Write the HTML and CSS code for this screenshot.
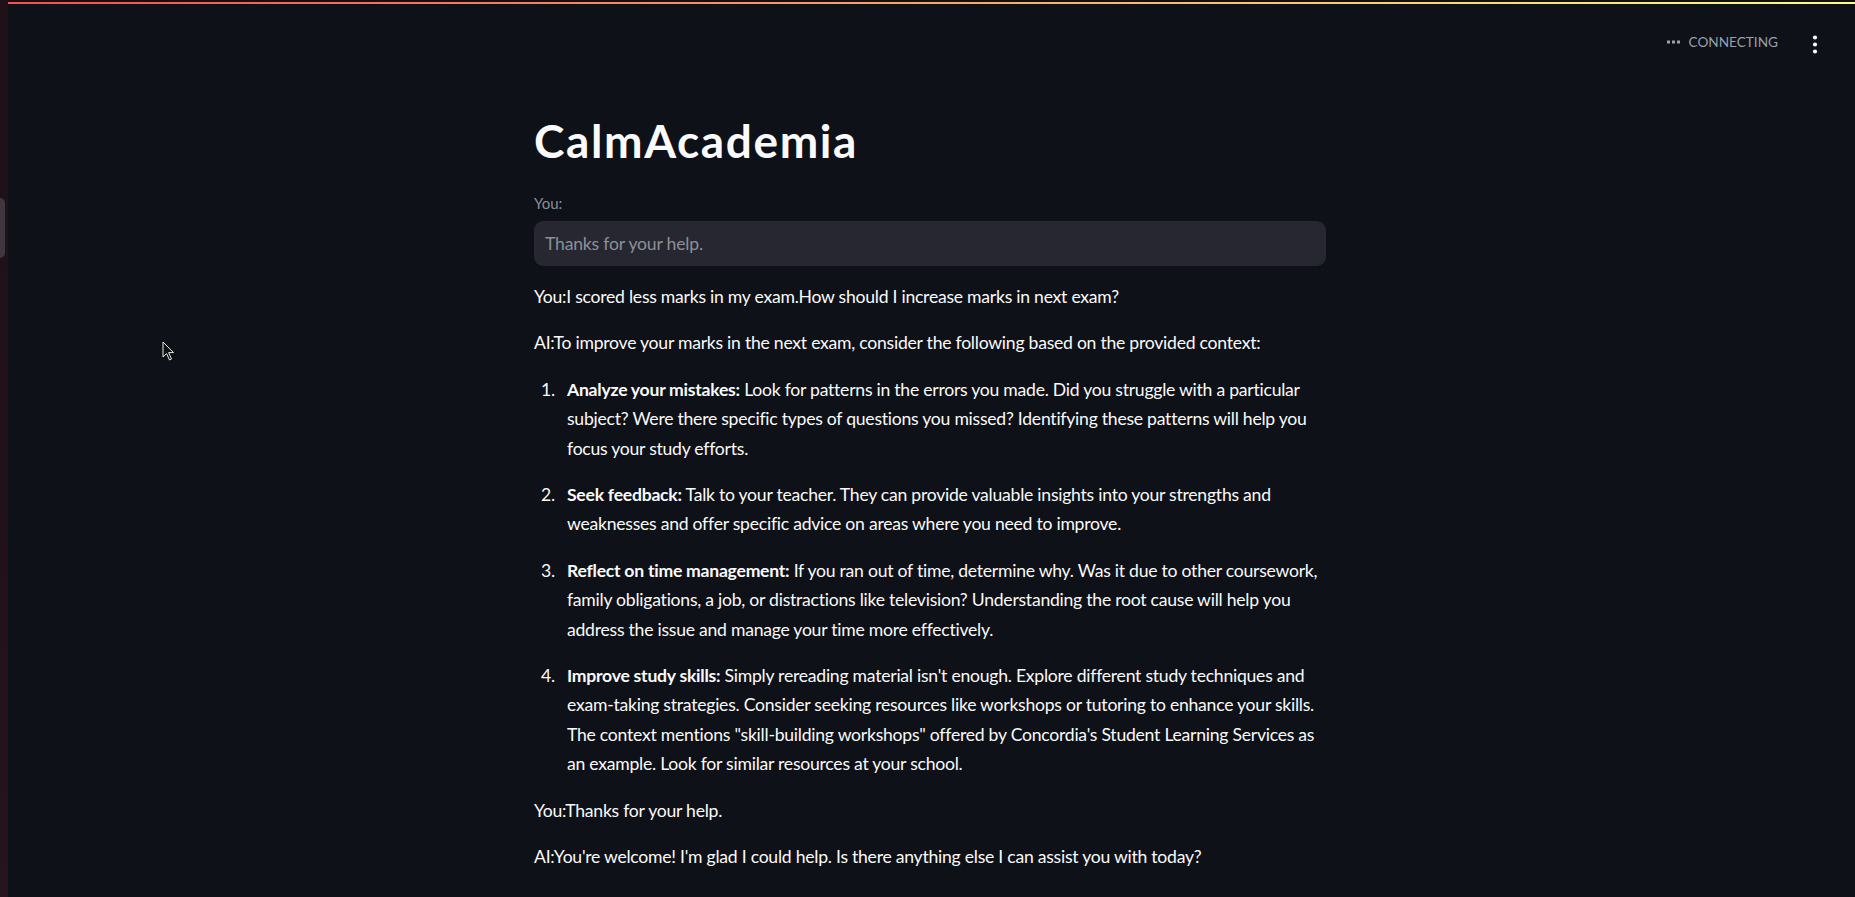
FILE: index.html
```html
<!DOCTYPE html>
<html lang="en">
<head>
<meta charset="utf-8">
<title>CalmAcademia</title>
<link rel="stylesheet" href="styles.css">
</head>
<body>
<div class="app">
  <aside class="edge">
    <div class="edge-handle"></div>
  </aside>
  <div class="main">
    <div class="decoration"></div>
    <header class="topbar">
      <div class="status">
        <svg class="status-dots" width="13" height="4" viewBox="0 0 13 4"><rect x="0" y="0.5" width="3" height="3" fill="#9aa0ad"/><rect x="5" y="0.5" width="3" height="3" fill="#9aa0ad"/><rect x="10" y="0.5" width="3" height="3" fill="#9aa0ad"/></svg>
        <span class="status-text">CONNECTING</span>
      </div>
      <button class="menu-btn" aria-label="Main menu">
        <svg width="6" height="19" viewBox="0 0 6 19"><circle cx="3" cy="2.5" r="2.1" fill="#fafafa"/><circle cx="3" cy="9.5" r="2.1" fill="#fafafa"/><circle cx="3" cy="16.5" r="2.1" fill="#fafafa"/></svg>
      </button>
    </header>
    <section class="content">
      <h1 class="title">CalmAcademia</h1>
      <label class="field-label" for="q">You:</label>
      <div class="field">
        <input id="q" class="field-input" type="text" value="Thanks for your help.">
      </div>
      <div class="chat">
        <p>You:I scored less marks in my exam.How should I increase marks in next exam?</p>
        <p>AI:To improve your marks in the next exam, consider the following based on the provided context:</p>
        <ol>
          <li><span class="li-num">1.</span><span class="li-body"><strong>Analyze your mistakes:</strong> Look for patterns in the errors you made. Did you struggle with a particular subject? Were there specific types of questions you missed? Identifying these patterns will help you focus your study efforts.</span></li>
          <li><span class="li-num">2.</span><span class="li-body"><strong>Seek feedback:</strong> Talk to your teacher. They can provide valuable insights into your strengths and weaknesses and offer specific advice on areas where you need to improve.</span></li>
          <li><span class="li-num">3.</span><span class="li-body"><strong>Reflect on time management:</strong> If you ran out of time, determine why. Was it due to other coursework, family obligations, a job, or distractions like television? Understanding the root cause will help you address the issue and manage your time more effectively.</span></li>
          <li><span class="li-num">4.</span><span class="li-body"><strong>Improve study skills:</strong> Simply rereading material isn't enough. Explore different study techniques and exam-taking strategies. Consider seeking resources like workshops or tutoring to enhance your skills. The context mentions "skill-building workshops" offered by Concordia's Student Learning Services as an example. Look for similar resources at your school.</span></li>
        </ol>
        <p>You:Thanks for your help.</p>
        <p>AI:You're welcome! I'm glad I could help. Is there anything else I can assist you with today?</p>
      </div>
    </section>
  </div>
  <svg class="cursor" width="13" height="21" viewBox="0 0 13 21"><path d="M1 1 L1 16 L4.5 12.5 L7.5 19 L9.5 18 L6.6 11.6 L11.5 11.6 Z" fill="#111" stroke="#e8e8e8" stroke-width="1"/></svg>
</div>
</body>
</html>
```

FILE: styles.css
```css
* { box-sizing: border-box; }
html, body {
  margin: 0;
  padding: 0;
  height: 100%;
  background: #0e1117;
  overflow: hidden;
}
body {
  font-family: Lato, "Noto Sans", sans-serif;
  color: #fafafa;
}
.app {
  display: flex;
  height: 897px;
  position: relative;
}
.edge {
  width: 8px;
  flex: 0 0 8px;
  background: linear-gradient(180deg, #1e1118 0%, #21121a 60%, #26141e 100%);
  padding-top: 198px;
}
.edge-handle {
  width: 5px;
  height: 60px;
  background: #3e3740;
  border-radius: 0 6px 6px 0;
}
.main {
  flex: 1;
  display: flex;
  flex-direction: column;
}
.decoration {
  margin-top: 2px;
  height: 2px;
  background: linear-gradient(90deg, #ff4b4b, #fffd80);
}
.topbar {
  display: flex;
  justify-content: flex-end;
  align-items: flex-start;
  height: 74px;
  margin-top: -2px;
  padding: 29px 37px 0 0;
  gap: 34px;
}
.status {
  display: flex;
  align-items: center;
  gap: 9px;
}
.status-text {
  font-size: 13.6px;
  color: #9aa0ad;
  line-height: 22px;
}
.menu-btn {
  background: none;
  border: 0;
  padding: 0;
  margin-top: 4px;
  display: flex;
}
.content {
  width: 792px;
  margin: 0 auto 0 526px;
}
.title {
  font-size: 46px;
  font-weight: 700;
  line-height: 60px;
  margin: 35px 0 22px;
  letter-spacing: 1.6px;
}
.field-label {
  display: block;
  font-size: 15px;
  color: #8b8e98;
  line-height: 20px;
  margin-bottom: 8px;
}
.field {
  height: 45px;
  background: #262730;
  border-radius: 9px;
  display: flex;
  align-items: center;
  padding: 0 11px;
}
.field-input {
  border: 0;
  background: transparent;
  width: 100%;
  font-family: inherit;
  font-size: 17.6px;
  letter-spacing: -0.2px;
  color: #8d8f98;
  outline: none;
  padding: 0;
}
.chat {
  margin-top: 16px;
  font-size: 17.6px;
  letter-spacing: -0.25px;
  line-height: 29.4px;
}
.chat p {
  margin: 0 0 17px;
}
.chat ol {
  margin: 0 0 17px;
  padding: 0;
  list-style: none;
}
.chat li {
  display: flex;
  align-items: flex-start;
  margin-bottom: 17px;
}
.li-num {
  flex: 0 0 33px;
  padding-left: 7px;
}
.li-body {
  flex: 1;
  min-width: 0;
}
.chat li:last-child { margin-bottom: 0; }
.chat strong { font-weight: 700; }
.cursor {
  position: absolute;
  left: 162px;
  top: 341px;
}
```
